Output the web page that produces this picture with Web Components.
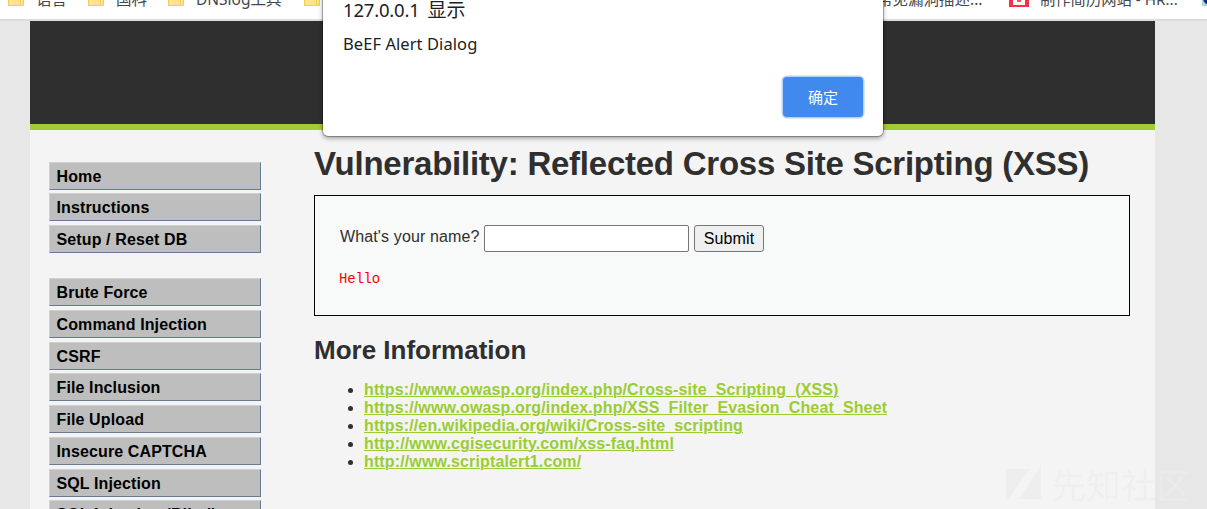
<!DOCTYPE html>
<html lang="zh-CN">
<head>
<meta charset="utf-8">
<title>Vulnerability: Reflected Cross Site Scripting (XSS)</title>
<style>
html,body{margin:0;height:100%;overflow:hidden}
body{background:#e7e7e7;font-family:"Liberation Sans",Arial,sans-serif;color:#2f2f2f}
</style>
</head>
<body>
<dvwa-screen></dvwa-screen>
<script>
function define(name, html, setup) {
  const t = document.createElement('template');
  t.innerHTML = html;
  customElements.define(name, class extends HTMLElement {
    constructor() {
      super();
      this.attachShadow({mode: 'open'}).append(t.content.cloneNode(true));
      if (setup) setup(this);
    }
  });
}

define('folder-icon', `<style>:host{display:block;width:16px;height:16px}svg{display:block}</style>
<svg width="16" height="16" viewBox="0 0 16 16"><path d="M0 1h7l2 2h6.500v13H0z" fill="#ffe591"/><path d="M0.500 15V2M0 15.500h14" stroke="#f6cf52" fill="none"/><path d="M12.500 15.500v-6h3v6z" stroke="#f6cf52" fill="#ffe591"/></svg>`);

define('bookmark-item', `<style>
:host{position:absolute;top:-10px;display:flex;gap:12px;height:16px;align-items:flex-start;white-space:nowrap;font:15.500px/18px "Noto Sans","Noto Sans CJK SC",sans-serif;color:#45484c}
</style><slot name="icon"></slot><span><slot></slot></span>`);

define('bookmark-bar', `<style>
:host{display:block;position:relative;height:19px;background:#fff;border-bottom:2px solid #dadce3;overflow:hidden}
svg{display:block}
</style>
<bookmark-item style="left:8px"><folder-icon slot="icon"></folder-icon>语言</bookmark-item>
<bookmark-item style="left:88px"><folder-icon slot="icon"></folder-icon>国科</bookmark-item>
<bookmark-item style="left:168px"><folder-icon slot="icon"></folder-icon>DNSlog工具</bookmark-item>
<bookmark-item style="left:304px"><folder-icon slot="icon"></folder-icon></bookmark-item>
<bookmark-item style="left:877px">常见漏洞描述...</bookmark-item>
<bookmark-item style="left:1009px;gap:11px;font-size:15.300px"><svg slot="icon" width="20" height="17" viewBox="0 0 20 17"><path fill="#fb3048" d="M0 0h20v17H0z"/><path fill="#fff" d="M4 3h12v12H4z"/><path d="M8 9l1 3 1-2 1 2 1-3" stroke="#fb3048" fill="none"/></svg>制作简历网站 - HR...</bookmark-item>
<bookmark-item style="left:1202px"><svg slot="icon" width="16" height="16"><path fill="#a9d9e8" d="M0 0h16v16H0z"/><circle cx="8" cy="8" r="7" fill="#0b2f91"/></svg></bookmark-item>`);

define('menu-item', `<style>
:host{display:block;box-sizing:border-box;width:212px;height:28px;margin-bottom:3.780px;padding-left:6.500px;background:#bebebe;border:1px solid #d0d0d0;border-right-color:#6b7a94;border-bottom-color:#6b7a94;font-weight:bold;font-size:16px;line-height:27px;color:#000;letter-spacing:.12px;white-space:nowrap}
</style><slot></slot>`);

define('side-menu', `<style>
:host{display:block;width:212px;padding:31.700px 0 0 19px}
div+div{margin-top:24.820px}
</style>
<div><menu-item>Home</menu-item><menu-item>Instructions</menu-item><menu-item>Setup / Reset DB</menu-item></div>
<div><menu-item>Brute Force</menu-item><menu-item>Command Injection</menu-item><menu-item>CSRF</menu-item><menu-item>File Inclusion</menu-item><menu-item>File Upload</menu-item><menu-item>Insecure CAPTCHA</menu-item><menu-item>SQL Injection</menu-item><menu-item>SQL Injection (Blind)</menu-item></div>`);

define('name-form', `<style>
:host{display:block;box-sizing:border-box;height:121px;border:1px solid #000;background:#f8faf9;padding:29px 25px 0}
form{display:flex;margin:0;height:27px;font-size:16px}
label{line-height:24px;width:144px;white-space:nowrap;letter-spacing:.13px}
input{box-sizing:border-box;width:205px;height:27px;border:1px solid #767676;border-radius:2px;background:#fff;margin:0 5px 0 0}
button{box-sizing:border-box;width:70px;height:27px;padding:0;border:1px solid #767676;border-radius:3px;background:#efefef;font:16px "Liberation Sans",Arial,sans-serif;letter-spacing:.15px;color:#000}
pre{margin:17px 0 0 -1px;font:14px/20px "Liberation Mono",monospace;letter-spacing:-.2px;color:#f00}
</style>
<form><label>What's your name?</label><input><button type="button">Submit</button></form>
<pre>Hello</pre>`);

define('info-links', `<style>
:host{display:block}
ul{margin:0;padding:0 0 0 50px;font-size:16px;line-height:18px}
a{color:#9acd32;font-weight:bold;text-decoration:underline;text-underline-offset:1px;text-decoration-thickness:1px;letter-spacing:.13px}
</style><ul></ul>`, el => {
  const ul = el.shadowRoot.querySelector('ul');
  for (const u of ['https://www.owasp.org/index.php/Cross-site_Scripting_(XSS)','https://www.owasp.org/index.php/XSS_Filter_Evasion_Cheat_Sheet','https://en.wikipedia.org/wiki/Cross-site_scripting','http://www.cgisecurity.com/xss-faq.html','http://www.scriptalert1.com/']) {
    const li = document.createElement('li'), a = document.createElement('a');
    a.href = '#'; a.textContent = u; li.append(a); ul.append(li);
  }
});

define('main-body', `<style>
:host{display:block;width:816px;padding-top:13px}
h1{margin:0;font-size:33px;letter-spacing:-.24px;line-height:41px;height:52px;white-space:nowrap}
h2{margin:19px 0 15px;font-size:26px;line-height:31px}
</style><h1>Vulnerability: Reflected Cross Site Scripting (XSS)</h1>
<name-form></name-form><h2>More Information</h2><info-links></info-links>`);

define('alert-dialog', `<style>
:host{position:absolute;left:323px;top:-20px;box-sizing:border-box;width:560px;height:156px;background:#fff;border-radius:0 0 5px 5px;box-shadow:0 0 0 1px rgba(0,0,0,.25),0 2px 5px rgba(0,0,0,.4);padding:16px 20px;font-family:"Noto Sans","Noto Sans CJK SC",sans-serif;color:#202124}
.t{font-size:19px;line-height:28px;height:34px;white-space:nowrap}
.t b{font-weight:normal;font-size:18.500px;letter-spacing:-.2px;margin-right:3px}
.m{font-size:16.500px;letter-spacing:.07px;line-height:28px;height:47px}
button{display:block;margin-left:auto;width:80px;height:40px;border:0;border-radius:4px;background:#4089ed;color:#fff;box-shadow:0 0 0 1.500px #b5d2fb;font:15px "Noto Sans CJK SC",sans-serif;padding:0 0 2px}
</style><div class="t"><b>127.0.0.1</b> 显示</div><div class="m">BeEF Alert Dialog</div><button>确定</button>`);

define('site-watermark', `<style>
:host{position:absolute;left:1006px;top:463px;display:flex;gap:10px;align-items:center;height:43px;font:35px/43px "Noto Sans CJK SC",sans-serif;color:#efefef;white-space:nowrap}
svg{position:relative;top:2px}
span{position:relative;top:-1px;background:linear-gradient(90deg,#efefef 103px,#eaeaea 103px);-webkit-background-clip:text;background-clip:text;color:transparent}
</style><svg width="35" height="43" viewBox="0 0 35 43"><path fill="#eeeeee" d="M0 4h24L0 37zM35 0v34H13z"/></svg><span>先知社区</span>`);

define('dvwa-screen', `<style>
:host{display:block;position:relative;height:509px;overflow:hidden}
main{width:1125px;height:488px;margin-left:30px;background:#f4f4f4}
header{height:103px;background:#2f2f2f;border-bottom:6px solid #a1cc33}
section{display:flex;gap:53px}
</style><bookmark-bar></bookmark-bar>
<main><header></header><section><side-menu></side-menu><main-body></main-body></section></main>
<site-watermark></site-watermark><alert-dialog></alert-dialog>`);
</script>
</body>
</html>
